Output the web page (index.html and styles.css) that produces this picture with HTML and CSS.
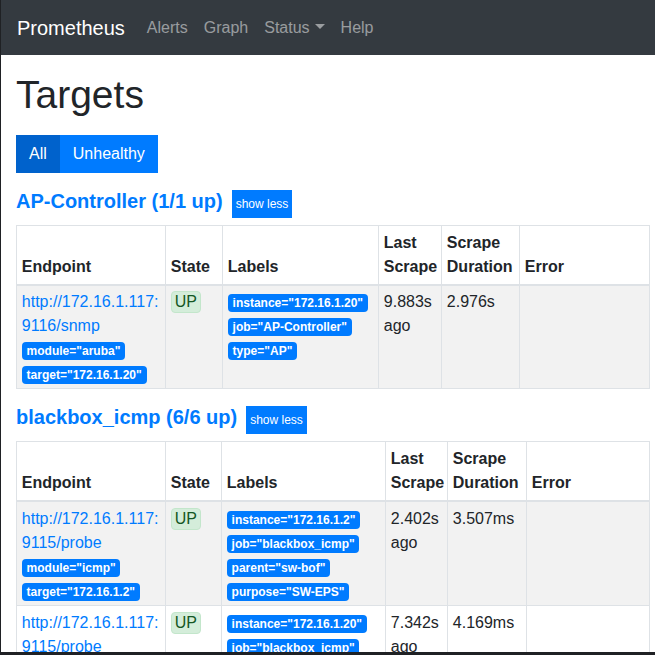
FILE: index.html
```html
<!DOCTYPE html>
<html lang="en">
<head>
<meta charset="utf-8">
<title>Prometheus Time Series Collection and Processing Server</title>
<link rel="stylesheet" href="styles.css">
</head>
<body>
<div class="window">
  <nav class="navbar">
    <a class="brand" href="#">Prometheus</a>
    <ul class="nav">
      <li><a class="nav-link" href="#">Alerts</a></li>
      <li><a class="nav-link" href="#">Graph</a></li>
      <li><a class="nav-link" href="#">Status<span class="caret"></span></a></li>
      <li><a class="nav-link" href="#">Help</a></li>
    </ul>
  </nav>
  <main class="container">
    <h1 class="title">Targets</h1>
    <div class="btn-group">
      <button class="btn active">All</button>
      <button class="btn">Unhealthy</button>
    </div>

    <section class="job">
      <div class="job-head">
        <h2><a href="#job-AP-Controller">AP-Controller (1/1 up)</a></h2>
        <button class="btn-sm">show less</button>
      </div>
      <table class="targets t-ap">
        <thead>
          <tr>
            <th class="c-endpoint">Endpoint</th>
            <th class="c-state">State</th>
            <th class="c-labels">Labels</th>
            <th class="c-last">Last Scrape</th>
            <th class="c-dur">Scrape Duration</th>
            <th class="c-err">Error</th>
          </tr>
        </thead>
        <tbody>
          <tr>
            <td class="endpoint"><a href="#">http://172.16.1.117:9116/snmp</a><br><span class="badge">module="aruba"</span><span class="badge">target="172.16.1.20"</span></td>
            <td><span class="state-up">UP</span></td>
            <td><span class="badge">instance="172.16.1.20"</span><span class="badge">job="AP-Controller"</span><span class="badge">type="AP"</span></td>
            <td>9.883s ago</td>
            <td>2.976s</td>
            <td></td>
          </tr>
        </tbody>
      </table>
    </section>

    <section class="job">
      <div class="job-head">
        <h2><a href="#job-blackbox_icmp">blackbox_icmp (6/6 up)</a></h2>
        <button class="btn-sm">show less</button>
      </div>
      <table class="targets t-bb">
        <thead>
          <tr>
            <th class="c-endpoint">Endpoint</th>
            <th class="c-state">State</th>
            <th class="c-labels">Labels</th>
            <th class="c-last">Last Scrape</th>
            <th class="c-dur">Scrape Duration</th>
            <th class="c-err">Error</th>
          </tr>
        </thead>
        <tbody>
          <tr>
            <td class="endpoint"><a href="#">http://172.16.1.117:9115/probe</a><br><span class="badge">module="icmp"</span><span class="badge">target="172.16.1.2"</span></td>
            <td><span class="state-up">UP</span></td>
            <td><span class="badge">instance="172.16.1.2"</span><span class="badge">job="blackbox_icmp"</span><span class="badge">parent="sw-bof"</span><span class="badge">purpose="SW-EPS"</span></td>
            <td>2.402s ago</td>
            <td>3.507ms</td>
            <td></td>
          </tr>
          <tr>
            <td class="endpoint"><a href="#">http://172.16.1.117:9115/probe</a><br><span class="badge">module="icmp"</span><span class="badge">target="172.16.1.20"</span></td>
            <td><span class="state-up">UP</span></td>
            <td><span class="badge">instance="172.16.1.20"</span><span class="badge">job="blackbox_icmp"</span><span class="badge">parent="sw-bof"</span><span class="badge">purpose="AP-Controller"</span></td>
            <td>7.342s ago</td>
            <td>4.169ms</td>
            <td></td>
          </tr>
          <tr>
            <td class="endpoint"><a href="#">http://172.16.1.117:9115/probe</a><br><span class="badge">module="icmp"</span><span class="badge">target="172.16.1.3"</span></td>
            <td><span class="state-up">UP</span></td>
            <td><span class="badge">instance="172.16.1.3"</span><span class="badge">job="blackbox_icmp"</span><span class="badge">parent="sw-bof"</span><span class="badge">purpose="SW-EPS"</span></td>
            <td>5.118s ago</td>
            <td>3.862ms</td>
            <td></td>
          </tr>
        </tbody>
      </table>
    </section>
  </main>
</div>
</body>
</html>
```
FILE: styles.css
```css
* {
  box-sizing: border-box;
}

html,
body {
  margin: 0;
  padding: 0;
}

body {
  background: #1f2124;
  font-family: "Liberation Sans", Arial, sans-serif;
  font-size: 16px;
  line-height: 1.5;
  color: #212529;
}

.window {
  height: 652px;
  overflow: hidden;
  background: #fff;
  border-left: 1px solid #1f2124;
}

/* navbar */
.navbar {
  display: flex;
  align-items: center;
  height: 55px;
  padding: 0 16px;
  background: #343a40;
}

.brand {
  font-size: 20px;
  line-height: 30px;
  color: #fff;
  text-decoration: none;
  margin-right: 14px;
}

.nav {
  display: flex;
  list-style: none;
  margin: 0;
  padding: 0;
}

.nav-link {
  display: block;
  padding: 0 8px;
  line-height: 24px;
  color: rgba(255, 255, 255, 0.5);
  text-decoration: none;
}

.caret {
  display: inline-block;
  margin-left: 5px;
  vertical-align: 4px;
  border-top: 5px solid;
  border-left: 5px solid transparent;
  border-right: 5px solid transparent;
}

/* content */
.container {
  padding: 0 5px 0 15px;
}

.title {
  font-size: 39px;
  font-weight: 500;
  line-height: 48px;
  margin: 16px 0 16px;
}

.btn-group {
  display: flex;
  margin-bottom: 16px;
}

.btn {
  font: inherit;
  font-size: 16px;
  line-height: 24px;
  padding: 6px 12px;
  border: 1px solid #007bff;
  background: #007bff;
  color: #fff;
  border-radius: 0;
}

.btn.active {
  background: #0062cc;
  border-color: #0062cc;
}

.job-head {
  display: flex;
  align-items: baseline;
  gap: 9px;
  margin-bottom: 7px;
}

.job-head h2 {
  margin: 0;
  font-size: 20px;
  line-height: 24px;
  font-weight: 700;
}

.job-head h2 a {
  color: #007bff;
  text-decoration: none;
}

.btn-sm {
  font: inherit;
  font-size: 12px;
  line-height: 18px;
  padding: 4px 3px;
  border: 1px solid #007bff;
  background: #007bff;
  color: #fff;
  border-radius: 0;
}

/* tables */
.targets {
  width: 100%;
  table-layout: fixed;
  border-collapse: collapse;
  margin-bottom: 16px;
}

.targets th,
.targets td {
  border: 1px solid #dee2e6;
  padding: 4.8px 4.8px 2px;
  text-align: left;
  vertical-align: top;
}

.targets thead th {
  vertical-align: bottom;
  border-bottom-width: 2px;
  padding-bottom: 4.8px;
  font-weight: 700;
}

.targets tbody tr:nth-of-type(odd) {
  background: #f2f2f2;
}

.t-ap .c-endpoint { width: 149px; }
.t-ap .c-state { width: 57px; }
.t-ap .c-labels { width: 156px; }
.t-ap .c-last { width: 63px; }
.t-ap .c-dur { width: 78px; }

.t-bb .c-endpoint { width: 149px; }
.t-bb .c-state { width: 56px; }
.t-bb .c-labels { width: 164px; }
.t-bb .c-last { width: 62px; }
.t-bb .c-dur { width: 79px; }

.endpoint a {
  color: #007bff;
  text-decoration: none;
  word-break: break-all;
}

.badge {
  display: inline-block;
  margin-right: 4px;
  padding: 3px 4.8px;
  font-size: 12px;
  font-weight: 700;
  line-height: 1;
  color: #fff;
  background: #007bff;
  border-radius: 4px;
  white-space: nowrap;
}

.state-up {
  display: inline-block;
  padding: 0 3px;
  line-height: 20px;
  color: #155724;
  background: #d4edda;
  border: 1px solid #c3e6cb;
  border-radius: 4px;
}
```
